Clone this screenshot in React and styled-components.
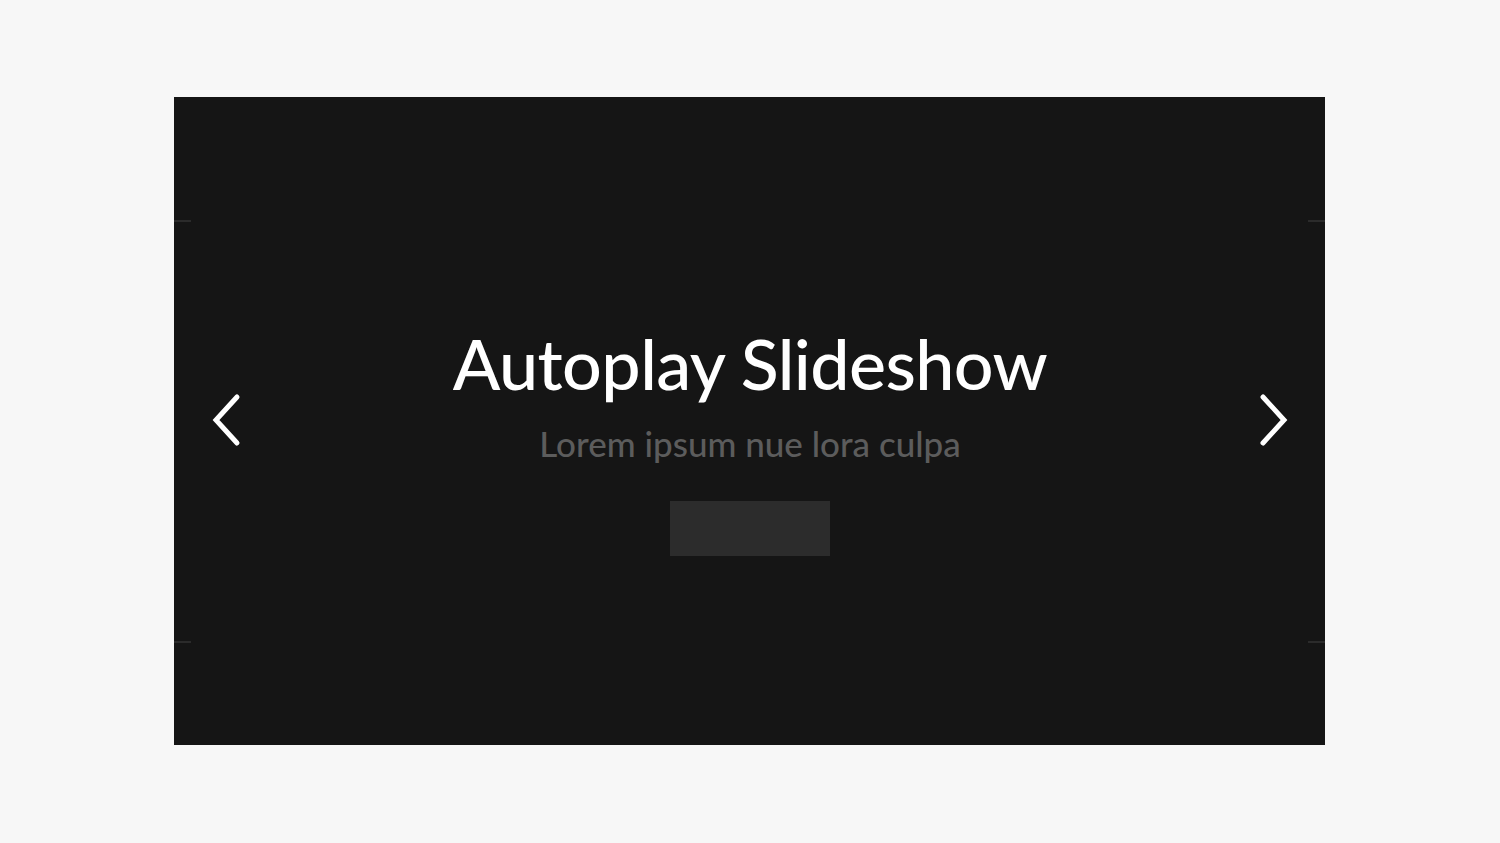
import React from 'react';
import styled, { createGlobalStyle } from 'styled-components';

const GlobalStyle = createGlobalStyle`
  body {
    margin: 0;
    background: #f7f7f7;
    font-family: Lato, "Open Sans", sans-serif;
  }
`;

const Page = styled.div`
  display: flex;
  padding: 97px 0 0 174px;
  min-height: 843px;
  box-sizing: border-box;
`;

const Slider = styled.section`
  position: relative;
  width: 1151px;
  height: 648px;
  background: #151515;
  display: flex;
  align-items: center;
  justify-content: space-between;
  padding: 0 37px 0 38px;
  box-sizing: border-box;
`;

// thin marks at the slider edges
const Tick = styled.span`
  position: absolute;
  top: ${p => p.top}px;
  ${p => (p.side === 'left' ? 'left: 0;' : 'right: 0;')}
  width: 17px;
  height: 2px;
  background: #2b2b2b;
`;

const Arrow = styled.button`
  border: 0;
  background: none;
  padding: 0;
  width: 30px;
  height: 56px;
  cursor: pointer;
  display: flex;
  align-items: center;
  justify-content: center;
`;

const Slide = styled.div`
  flex: 1;
  display: flex;
  flex-direction: column;
  align-items: center;
  padding-top: 37px;
`;

const Title = styled.h1`
  margin: 0;
  color: #fff;
  font-size: 70px;
  font-weight: 500;
  line-height: 80px;
  letter-spacing: -0.6px;
`;

const Subtitle = styled.p`
  margin: 20px 0 0;
  color: #5c5c5c;
  font-size: 35px;
  font-weight: 500;
  line-height: 40px;
`;

const Action = styled.div`
  margin-top: 38px;
  width: 160px;
  height: 55px;
  background: #2c2c2c;
`;

const Chevron = ({ dir }) => (
  <svg width="30" height="56" viewBox="0 0 30 56" fill="none">
    <path
      d={dir === 'left' ? 'M25 4 L4 27 L25 50' : 'M5 4 L26 27 L5 50'}
      stroke="#fff"
      strokeWidth="5"
      strokeLinecap="round"
      strokeLinejoin="miter"
    />
  </svg>
);

export default function App() {
  return (
    <Page>
      <GlobalStyle />
      <Slider>
        <Tick side="left" top={123} />
        <Tick side="right" top={123} />
        <Tick side="left" top={544} />
        <Tick side="right" top={544} />
        <Arrow aria-label="Previous">
          <Chevron dir="left" />
        </Arrow>
        <Slide>
          <Title>Autoplay Slideshow</Title>
          <Subtitle>Lorem ipsum nue lora culpa</Subtitle>
          <Action />
        </Slide>
        <Arrow aria-label="Next">
          <Chevron dir="right" />
        </Arrow>
      </Slider>
    </Page>
  );
}
